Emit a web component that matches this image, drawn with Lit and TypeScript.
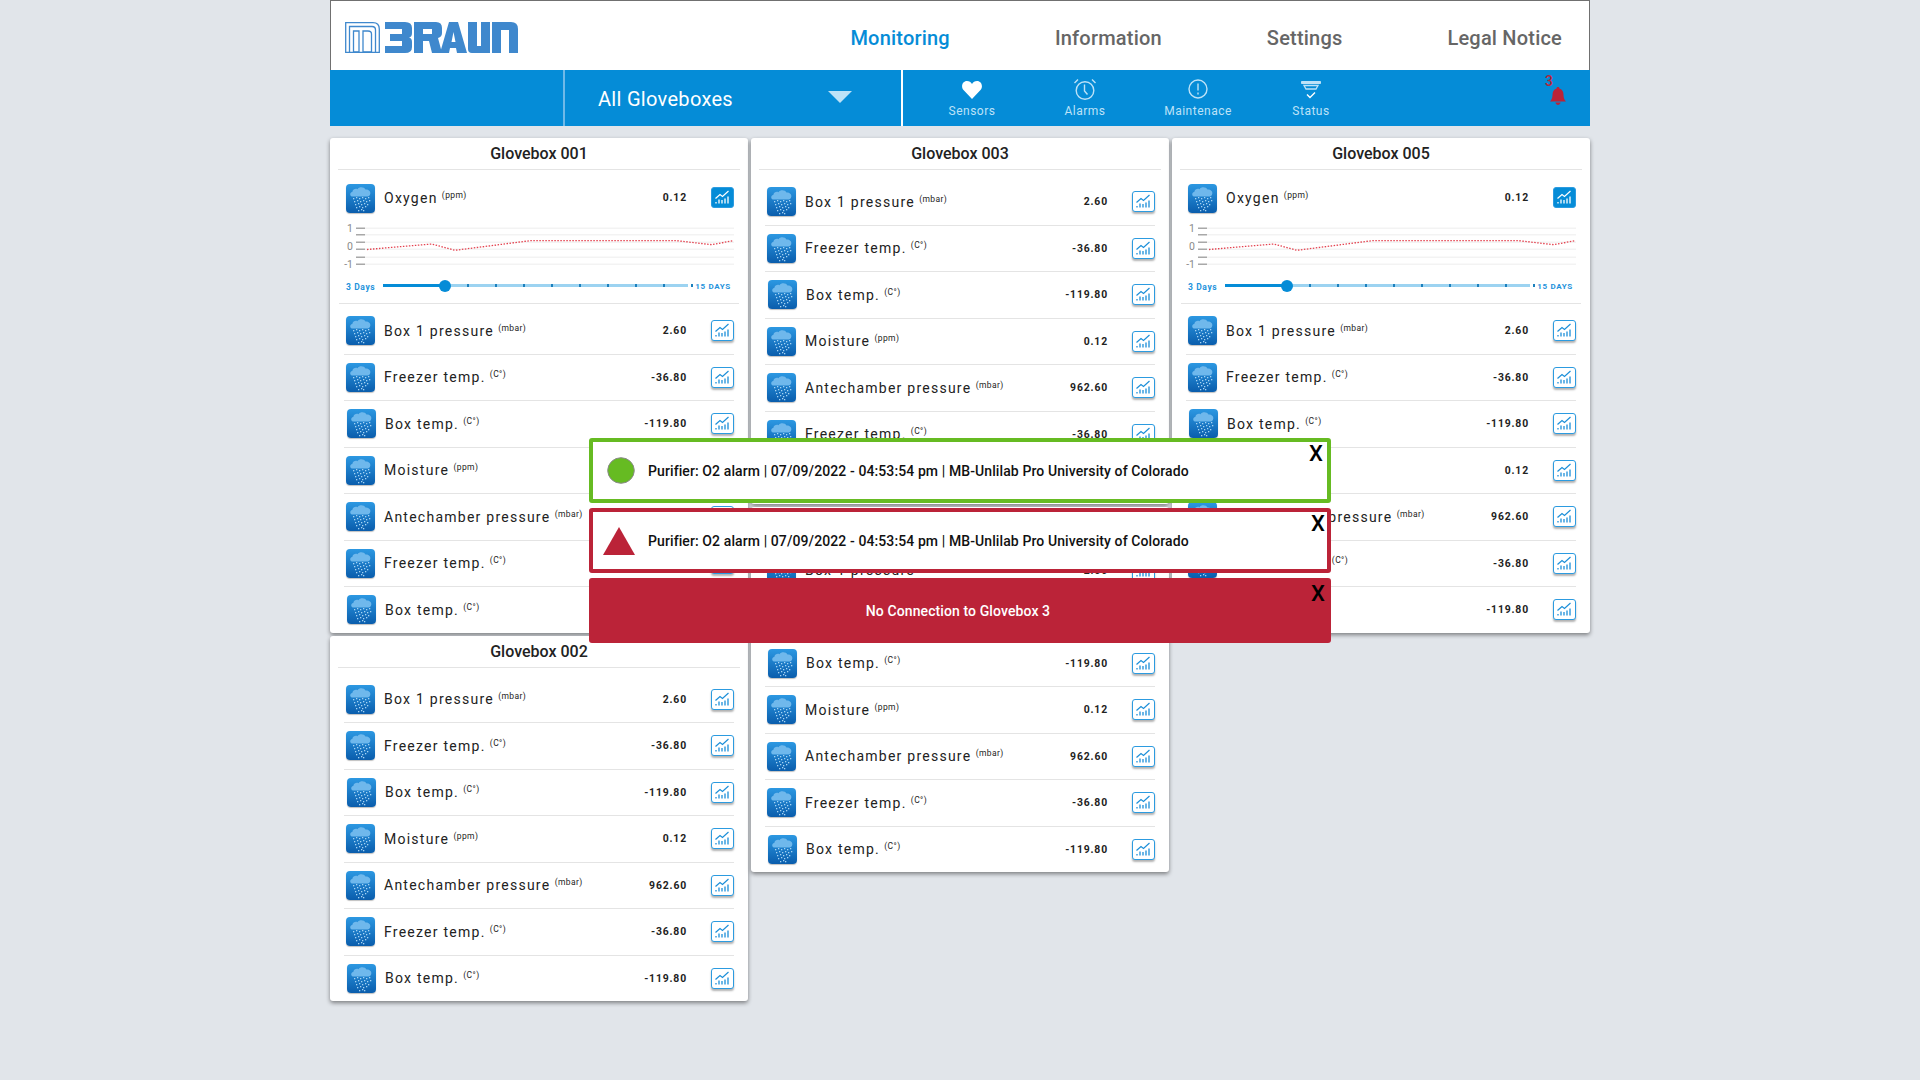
import { html, svg, css, LitElement } from "lit"
import { customElement, property } from "lit/decorators.js"

type Sensor = { name: string; unit: string; value: string; nudge?: boolean }

const SENSORS: Sensor[] = [
  { name: "Box 1 pressure", unit: "(mbar)", value: "2.60" },
  { name: "Freezer temp.", unit: "(C°)", value: "-36.80" },
  { name: "Box temp.", unit: "(C°)", value: "-119.80", nudge: true },
  { name: "Moisture", unit: "(ppm)", value: "0.12" },
  { name: "Antechamber pressure", unit: "(mbar)", value: "962.60" },
  { name: "Freezer temp.", unit: "(C°)", value: "-36.80" },
  { name: "Box temp.", unit: "(C°)", value: "-119.80", nudge: true },
]

// rain dots of the sensor icon, in its 29x29 box
const DROPS = [
  [7, 14], [10, 13], [13, 14], [16, 13], [19, 14], [22, 13],
  [8, 17], [11, 16], [14, 17], [17, 16], [20, 17], [23, 16],
  [9, 20], [12, 19], [15, 20], [18, 19], [21, 20],
  [10, 23], [13, 22], [16, 23], [19, 22],
  [12, 26], [15, 25], [17, 26],
]

const GRID_Y = [7, 13.5, 21, 28, 36, 43]
const SLIDER_TICKS = [0, 1, 2, 3, 4, 5, 6, 7, 8]

@customElement("glovebox-card")
class GloveboxCard extends LitElement {
  @property()
  title: string

  @property({ type: Boolean })
  oxygen = false

  static styles = css`
    :host {
      display: block;
    }

    .card {
      background: #fff;
      border-radius: 3px;
      box-shadow: 0 2px 4px rgba(0, 0, 0, 0.45);
      font-family: Roboto, sans-serif;
      color: #222;
    }

    .title {
      height: 31px;
      margin: 0 8px;
      border-bottom: 1px solid #e4e4e4;
      display: flex;
      align-items: center;
      justify-content: center;
      font-size: 16px;
      font-weight: 500;
    }

    .rows {
      padding-top: 9px;
    }

    .rows.after-chart {
      padding-top: 4px;
    }

    .row {
      height: 46.5px;
      box-sizing: border-box;
      margin: 0 14px;
      padding-left: 2px;
      display: flex;
      align-items: center;
      border-bottom: 1px solid #e4e4e4;
    }

    .row:last-child {
      height: 45.5px;
      border-bottom: none;
    }

    .row.top,
    .row.top:last-child {
      height: 46px;
      margin-top: -4px;
      border-bottom: none;
    }

    .row.top .value,
    .row.top .trend {
      margin-bottom: 2px;
    }

    .row.nudge .drop {
      margin-left: 1px;
    }

    .drop {
      width: 29px;
      height: 29px;
      flex: none;
      border-radius: 4px;
      background: linear-gradient(#2c98e2, #0a5dac);
      box-shadow: 0 1px 1px rgba(0, 0, 0, 0.25);
    }

    .drop svg,
    .trend svg {
      display: block;
    }

    .name {
      margin-left: 9px;
      font-size: 14px;
      letter-spacing: 1.25px;
      white-space: nowrap;
    }

    .name sup {
      font-size: 8.5px;
      letter-spacing: 0.4px;
      margin-left: -0.5px;
      vertical-align: 5px;
      line-height: 0;
    }

    .value {
      margin-left: auto;
      margin-right: 24px;
      font-size: 10.4px;
      font-weight: 700;
      letter-spacing: 0.85px;
    }

    .trend {
      width: 23px;
      height: 21px;
      flex: none;
      box-sizing: border-box;
      border: 1px solid #2c9be0;
      border-radius: 3px;
      background: #fff;
      color: #1c8fd9;
      box-shadow: 0 2px 2px rgba(0, 0, 0, 0.3);
    }

    .trend.on {
      background: #058cd7;
      color: #fff;
      box-shadow: none;
    }

    .chart {
      display: block;
    }

    .chart text {
      font-size: 10.5px;
      fill: #8a8a8a;
      text-anchor: end;
    }

    .range {
      margin: 0 9px;
      padding: 10px 8px 0 7px;
      height: 33px;
      box-sizing: border-box;
      border-bottom: 1px solid #e4e4e4;
      display: flex;
      align-items: flex-start;
      font-size: 8.5px;
      font-weight: 700;
      letter-spacing: 0.6px;
      color: #1f93dc;
      white-space: nowrap;
    }

    .range span {
      line-height: 12px;
    }

    .range span:first-child {
      width: 28px;
      flex: none;
    }

    .range span:last-child {
      margin-left: auto;
      font-size: 8px;
      letter-spacing: 0.7px;
    }

    .track {
      position: relative;
      flex: none;
      width: 305px;
      height: 3px;
      margin: 3px 0 0 9px;
      background: #9cd3f1;
    }

    .fill {
      position: absolute;
      left: 0;
      top: 0;
      bottom: 0;
      width: 62px;
      background: #058cd7;
    }

    .thumb {
      position: absolute;
      left: 56px;
      top: -4.5px;
      width: 12px;
      height: 12px;
      border-radius: 50%;
      background: #058cd7;
    }

    .tick {
      position: absolute;
      top: 0;
      width: 2px;
      height: 3px;
      background: #1c80bd;
    }
  `

  renderDrop() {
    return html`<div class="drop">
      <svg width="29" height="29" viewBox="0 0 29 29">
        <path
          d="M6 12.500c-2.200-.4-2.600-4 .4-4.800C7 5 9.500 4.300 11.500 5.200 13 2.800 18 2.600 19.500 5.500c2.500-.4 5.300 1.500 4.800 4.200-.3 2-1.800 2.800-3.800 2.800Z"
          fill="#6fb8ec"
        />
        ${DROPS.map(([x, y]) => svg`<rect x=${x} y=${y} width="1.3" height="1.3" fill="#a5d3f3"></rect>`)}
      </svg>
    </div>`
  }

  renderTrend(on = false) {
    return html`<div class="trend ${on ? "on" : ""}">
      <svg width="21" height="19" viewBox="0 0 21 19" fill="none" stroke="currentColor">
        <path d="M3.500 10.500 8 6.500l2.500 2L16.500 3" stroke-width="1.200" />
        <path d="M4 15.500v-1.500M7 15.500v-4M10 15.500v-3.500M13 15.500v-5M16 15.500v-7" stroke-width="1.300" />
      </svg>
    </div>`
  }

  renderRow(s: Sensor) {
    return html`<div class="row ${s.nudge ? "nudge" : ""}">
      ${this.renderDrop()}
      <div class="name">${s.name} <sup>${s.unit}</sup></div>
      <div class="value">${s.value}</div>
      ${this.renderTrend()}
    </div>`
  }

  renderOxygen() {
    return html`
      <div class="rows">
        <div class="row top">
          ${this.renderDrop()}
          <div class="name">Oxygen <sup>(ppm)</sup></div>
          <div class="value">0.12</div>
          ${this.renderTrend(true)}
        </div>
      </div>
      <svg class="chart" width="418" height="50" viewBox="0 0 418 50">
        ${GRID_Y.map(
          (y) => svg`
            <rect x="26" y=${y - 0.5} width="9" height="1.5" fill="#a8a8a8"></rect>
            <rect x="35" y=${y - 0.5} width="369" height="1.5" fill="#f3f3f3"></rect>
          `
        )}
        <text x="23" y="11">1</text>
        <text x="23" y="29">0</text>
        <text x="23" y="47">-1</text>
        <polyline
          points="37,28.5 101.7,23 125,29.3 200,19.7 347,19.7 381.7,23.7 403,19.7"
          fill="none"
          stroke="#e4424f"
          stroke-width="1.3"
          stroke-dasharray="1.5 1.5"
        />
      </svg>
      <div class="range">
        <span>3 Days</span>
        <div class="track">
          ${SLIDER_TICKS.map((i) => html`<div class="tick" style="left: ${84 + i * 28}px"></div>`)}
          <div class="fill"></div>
          <div class="thumb"></div>
        </div>
        <span>15 DAYS</span>
      </div>
    `
  }

  render() {
    return html`<div class="card">
      <div class="title">${this.title}</div>
      ${this.oxygen ? this.renderOxygen() : ""}
      <div class="rows ${this.oxygen ? "after-chart" : ""}">
        ${SENSORS.map((s) => this.renderRow(s))}
      </div>
    </div>`
  }
}

@customElement("app-root")
export default class AppRoot extends LitElement {
  static styles = css`
    :host {
      display: block;
      min-height: 1080px;
      background: #e1e5ea;
      font-family: Roboto, sans-serif;
    }

    .shell {
      position: relative;
      width: 1260px;
      margin: 0 auto;
    }

    .head {
      height: 70px;
      box-sizing: border-box;
      background: #fff;
      border: 1px solid #707070;
      border-bottom: none;
      display: flex;
      align-items: center;
      padding: 0 27px 0 14px;
    }

    .logo {
      display: block;
      margin-top: 3px;
    }

    .nav {
      margin-left: auto;
      display: flex;
      gap: 105px;
      font-size: 20px;
      font-weight: 500;
      letter-spacing: 0.2px;
      color: #666;
      padding-top: 5px;
    }

    .nav .active {
      color: #058cd7;
    }

    .bar {
      height: 56px;
      background: #058cd7;
      display: flex;
      position: relative;
    }

    .bar-left {
      width: 233px;
      border-right: 2px solid #6fb9e8;
    }

    .select {
      width: 254px;
      border-right: 2px solid #fff;
      display: flex;
      align-items: center;
      justify-content: space-between;
      padding: 2px 49px 0 33px;
      color: #fff;
      font-size: 20px;
      letter-spacing: 0.3px;
    }

    .caret {
      width: 0;
      height: 0;
      border-left: 12px solid transparent;
      border-right: 12px solid transparent;
      border-top: 12px solid #bde2f7;
      margin-top: -4px;
    }

    .tabs {
      display: flex;
      padding-left: 12.5px;
    }

    .tab {
      width: 113px;
      display: flex;
      flex-direction: column;
      align-items: center;
      color: #bde2f7;
      font-size: 12px;
      letter-spacing: 0.5px;
      padding-top: 8px;
      box-sizing: border-box;
    }

    .tab svg {
      display: block;
      height: 23px;
    }

    .tab span {
      margin-top: 3px;
      line-height: 14px;
    }

    .bell {
      position: absolute;
      right: 22px;
      top: 16px;
      width: 20px;
      height: 20px;
    }

    .bell b {
      position: absolute;
      left: -3px;
      top: -13px;
      font-size: 14px;
      font-weight: 500;
      color: #bb2338;
    }

    .bell svg {
      display: block;
    }

    .grid {
      display: flex;
      gap: 3px;
      padding-top: 12px;
      align-items: flex-start;
    }

    .col {
      width: 418px;
      display: flex;
      flex-direction: column;
      gap: 3px;
    }

    .toasts {
      position: absolute;
      left: 259px;
      top: 438px;
      width: 742px;
      display: flex;
      flex-direction: column;
      gap: 5px;
    }

    .toast {
      position: relative;
      height: 65px;
      box-sizing: border-box;
      background: #fff;
      border: 4px solid #66bb22;
      border-radius: 3px;
      display: flex;
      align-items: center;
      color: #111;
      font-size: 14px;
      font-weight: 500;
      letter-spacing: 0.1px;
    }

    .toast.red {
      border-color: #bb2338;
    }

    .toast.solid {
      border-color: #bb2338;
      background: #bb2338;
      color: #fff;
      justify-content: center;
      padding-right: 4px;
    }

    .mark {
      width: 55px;
      flex: none;
      display: flex;
      justify-content: center;
    }

    .red .mark {
      padding-right: 4px;
      width: 51px;
    }

    .mark svg {
      display: block;
    }

    .close {
      position: absolute;
      right: 4px;
      top: -1px;
      color: #000;
      font-size: 22px;
      font-weight: 500;
      line-height: 26px;
    }

    .toast.red .close,
    .toast.solid .close {
      right: 2px;
    }
  `

  render() {
    return html`<div class="shell">
      <div class="head">
        <svg class="logo" width="173" height="31" viewBox="0 0 173 31">
          <g fill="none" stroke="#3f88cd" stroke-width="1.3">
            <path d="M.7.7H28Q34.3.7 34.3 7V30.3H.7Z" />
            <path d="M4.5 30V4.500H27Q30.500 4.500 30.500 8V30" />
            <path d="M8.5 30V9H14V30M8.500 30H14" />
            <path d="M18 30V9H23Q26.500 9 26.500 12V30H18" />
          </g>
          <g fill="#3f88cd" fill-rule="evenodd">
            <path d="M40 0H60Q67 0 67 6V11Q67 15 64 15.500Q67 16 67 20V25Q67 31 60 31H40V24H57V19H45V12H57V7H40Z" />
            <path d="M69 0H91Q97 0 97 6V11Q97 15 93 16L97 31H87L84 19H78V31H69ZM78 7H87V12H78Z" />
            <path d="M104 0H113L122 31H112L111 26H105L104 31H95ZM108.500 10L106.500 20H110.500Z" />
            <path d="M123 0H132V24H136V0H145V31H127Q123 31 123 27Z" />
            <path d="M147 0H166Q173 0 173 7V31H164V8H156V31H147Z" />
          </g>
        </svg>
        <nav class="nav">
          <span class="active">Monitoring</span>
          <span>Information</span>
          <span>Settings</span>
          <span>Legal Notice</span>
        </nav>
      </div>

      <div class="bar">
        <div class="bar-left"></div>
        <div class="select">
          <span>All Gloveboxes</span>
          <div class="caret"></div>
        </div>
        <div class="tabs">
          <div class="tab">
            <svg width="22" height="23" viewBox="0 0 22 23">
              <path d="M11 21 2.500 12C-.5 8.500 1.500 3 6 3c2.200 0 4 1 5 3 1-2 2.800-3 5-3 4.500 0 6.500 5.500 3.500 9Z" fill="#fff" />
            </svg>
            <span>Sensors</span>
          </div>
          <div class="tab">
            <svg width="24" height="23" viewBox="0 0 24 23" fill="none" stroke="#bde2f7" stroke-width="1.4">
              <circle cx="12" cy="12.5" r="8.8" />
              <path d="M11.500 6.500v6.500l3 3.500" />
              <path d="M1.500 5 5 1.500M22.500 5 19 1.500" />
            </svg>
            <span>Alarms</span>
          </div>
          <div class="tab">
            <svg width="22" height="23" viewBox="0 0 22 23" fill="none" stroke="#bde2f7" stroke-width="1.4">
              <circle cx="11" cy="11" r="9" />
              <path d="M11 5.500v7M11 14.500v2" />
            </svg>
            <span>Maintenace</span>
          </div>
          <div class="tab">
            <svg width="22" height="23" viewBox="0 0 22 23" fill="none" stroke="#bde2f7">
              <path d="M1.500 3.500h19v2h-19Z" fill="#bde2f7" />
              <path d="M4 7.500h14l-2 3.500H6Z" stroke-width="1.3" />
              <path d="M7 16.500l3 3 5-5" stroke="#fff" stroke-width="1.4" />
            </svg>
            <span>Status</span>
          </div>
        </div>
        <div class="bell">
          <b>3</b>
          <svg width="20" height="20" viewBox="0 0 20 20">
            <path d="M10 1c1 0 1.500.7 1.500 1.500C14.500 3.500 15.500 6 15.500 9c0 3 1 5 2.500 6.500H2C3.500 14 4.500 12 4.500 9c0-3 1-5.500 4-6.500C8.500 1.700 9 1 10 1Z" fill="#bb2338" />
            <path d="M7.500 16.500h5C12.500 18 11 19 10 19s-2.500-1-2.500-2.500Z" fill="#bb2338" />
          </svg>
        </div>
      </div>

      <div class="grid">
        <div class="col">
          <glovebox-card title="Glovebox 001" oxygen></glovebox-card>
          <glovebox-card title="Glovebox 002"></glovebox-card>
        </div>
        <div class="col">
          <glovebox-card title="Glovebox 003"></glovebox-card>
          <glovebox-card title="Glovebox 004"></glovebox-card>
        </div>
        <div class="col">
          <glovebox-card title="Glovebox 005" oxygen></glovebox-card>
        </div>
      </div>

      <div class="toasts">
        <div class="toast">
          <div class="mark">
            <svg width="28" height="27" viewBox="0 0 28 27">
              <ellipse cx="14" cy="13.5" rx="13.3" ry="12.8" fill="#66bb22" stroke="#8a8a8a" />
            </svg>
          </div>
          Purifier: O2 alarm | 07/09/2022 - 04:53:54 pm | MB-Unlilab Pro University of Colorado
          <div class="close">X</div>
        </div>
        <div class="toast red">
          <div class="mark">
            <svg width="32" height="28" viewBox="0 0 32 28">
              <path d="M16 0 32 28H0Z" fill="#bb2338" />
            </svg>
          </div>
          Purifier: O2 alarm | 07/09/2022 - 04:53:54 pm | MB-Unlilab Pro University of Colorado
          <div class="close">X</div>
        </div>
        <div class="toast solid">
          No Connection to Glovebox 3
          <div class="close">X</div>
        </div>
      </div>
    </div>`
  }
}
